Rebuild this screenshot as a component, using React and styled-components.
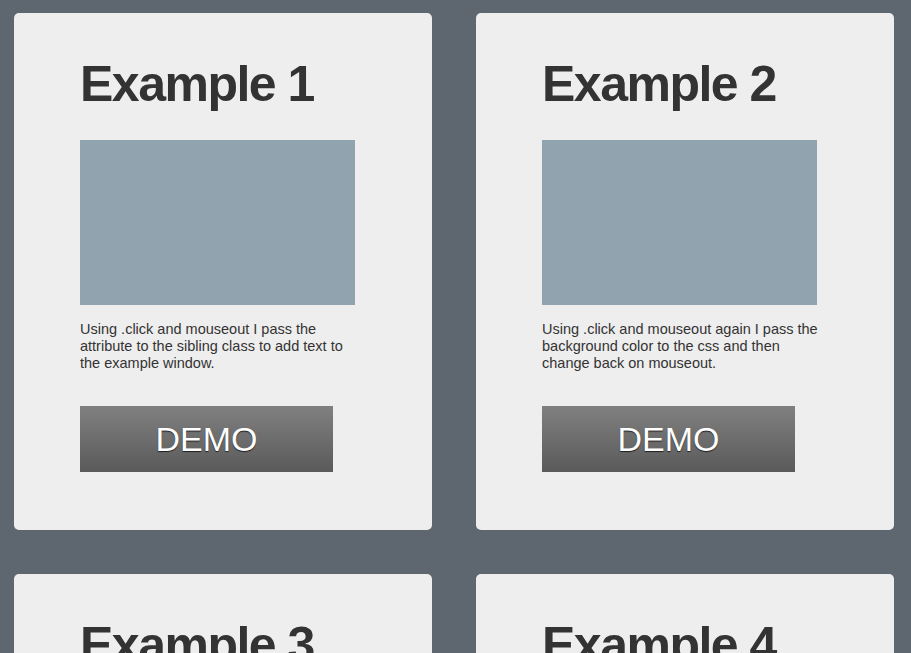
import React from "react";
import styled, { createGlobalStyle } from "styled-components";

const GlobalStyle = createGlobalStyle`
    body {
        margin: 0;
        background-color: #5e676f;
        font-family: "Liberation Sans", Arial, Helvetica, sans-serif;
    }
`;

const Page = styled.main`
    display: grid;
    grid-template-columns: 418px 418px;
    column-gap: 44px;
    row-gap: 44px;
    padding: 13px 0 40px 14px;
`;

const Card = styled.section`
    display: flex;
    flex-direction: column;
    align-items: flex-start;
    padding: 46px 66px 58px;
    background-color: #eeeeee;
    border-radius: 5px;
`;

const Title = styled.h2`
    margin: 0 0 31px;
    font-size: 50px;
    line-height: 50px;
    letter-spacing: -1.5px;
    font-weight: 700;
    color: #333333;
`;

const Preview = styled.div`
    width: 275px;
    height: 165px;
    background-color: ${props => props.$color || "#91a3ae"};
`;

const Text = styled.p`
    width: 284px;
    margin: 16px 0 34px;
    font-size: 14.5px;
    line-height: 17px;
    color: #333333;
`;

const DemoButton = styled.button`
    width: 253px;
    height: 66px;
    padding: 0;
    border: none;
    background: linear-gradient(to bottom, #808080, #5a5a5a);
    color: #ffffff;
    font-family: "Liberation Sans", Arial, Helvetica, sans-serif;
    font-size: 34px;
    line-height: 66px;
    text-shadow: 0 1px 1px rgba(0, 0, 0, 0.7);
    cursor: pointer;
`;

const examples = [
    { title: "Example 1", text: "Using .click and mouseout I pass the attribute to the sibling class to add text to the example window." },
    { title: "Example 2", text: "Using .click and mouseout again I pass the background color to the css and then change back on mouseout." },
    { title: "Example 3", text: "Using .hover I toggle a class on the example window to change its size." },
    { title: "Example 4", text: "Using .click I fade the example window out and back in again." },
];

function App() {
    return (
        <>
            <GlobalStyle />
            <Page>
                {examples.map(item => (
                    <Card key={item.title}>
                        <Title>{item.title}</Title>
                        <Preview />
                        <Text>{item.text}</Text>
                        <DemoButton>DEMO</DemoButton>
                    </Card>
                ))}
            </Page>
        </>
    );
}

export default App;
